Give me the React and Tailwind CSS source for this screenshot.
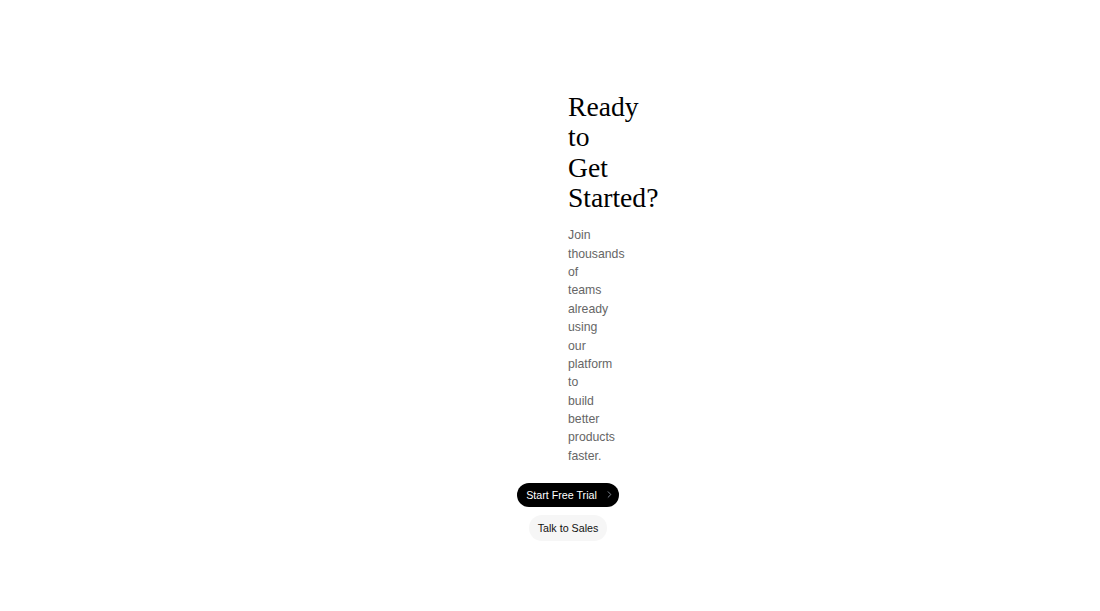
export default function App() {
  return (
    <div className="min-h-screen bg-white flex flex-col items-center pl-[36px] pt-[91.6px]">
      <div className="w-0">
        <h2 className="text-[27.6px] leading-[30.6px] text-black font-normal" style={{ fontFamily: '"Liberation Serif", serif' }}>
          Ready to Get Started?
        </h2>
        <p className="mt-[12.3px] text-[12.25px] leading-[18.38px] text-[#666666]" style={{ fontFamily: '"Liberation Sans", Arial, sans-serif' }}>
          Join thousands of teams already using our platform to build better products faster.
        </p>
      </div>
      <div className="mt-[17.6px] flex flex-col items-center gap-[8px]" style={{ fontFamily: '"Liberation Sans", Arial, sans-serif' }}>
        <button className="flex items-center gap-[7px] h-[24.5px] pl-[9px] pr-[4px] rounded-full bg-black text-white text-[10.7px]">
          Start Free Trial
          <svg width="11" height="11" viewBox="0 0 24 24" fill="none" stroke="#9ca3af" strokeWidth="1.8" strokeLinecap="round" strokeLinejoin="round">
            <path d="m9 18 6-6-6-6" />
          </svg>
        </button>
        <button className="h-[26px] px-[9px] rounded-full bg-[#f6f6f6] text-[#111] text-[10.7px]">
          Talk to Sales
        </button>
      </div>
    </div>
  );
}
